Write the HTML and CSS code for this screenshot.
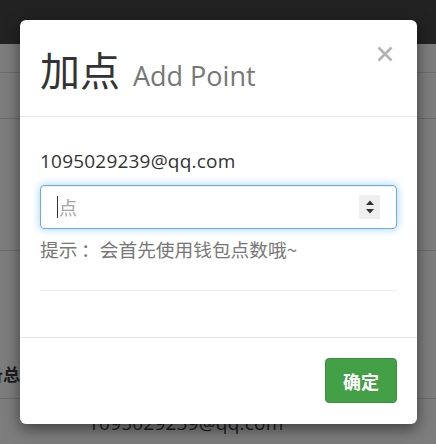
FILE: index.html
```html
<!DOCTYPE html>
<html lang="zh-CN">
<head>
<meta charset="utf-8">
<title>加点</title>
<link rel="stylesheet" href="styles.css">
</head>
<body>
<div class="page">
  <div class="navbar"></div>
  <div class="row r1"></div>
  <div class="row r2"></div>
  <div class="row r3"></div>
  <div class="row r4"><span class="cut"><span>设备总</span></span></div>
  <div class="row r5"><span class="bg-email">1095029239@qq.com</span></div>
</div>

<div class="modal">
  <div class="modal-header">
    <h4 class="modal-title"><span class="zh">加点</span><small>Add Point</small></h4>
    <button class="close" type="button" aria-label="Close">
      <svg width="16" height="16" viewBox="0 0 16 16"><path d="M1.5 1.5 L14.5 14.5 M14.5 1.5 L1.5 14.5" stroke="#b3b3b3" stroke-width="2.6" fill="none"/></svg>
    </button>
  </div>
  <div class="modal-body">
    <p class="email">1095029239@qq.com</p>
    <div class="field">
      <span class="caret"></span>
      <input class="num" type="text" placeholder="点">
      <span class="spin">
        <svg width="10" height="16" viewBox="0 0 10 16"><path d="M1 6 L5 1.5 L9 6 Z M1 10 L5 14.5 L9 10 Z" fill="#333"/></svg>
      </span>
    </div>
    <p class="hint">提示&#8201;：会首先使用钱包点数哦~</p>
    <hr class="sep">
  </div>
  <div class="modal-footer">
    <button class="btn-ok" type="button">确定</button>
  </div>
</div>
</body>
</html>
```

FILE: styles.css
```css
* { box-sizing: border-box; }
html, body { margin: 0; padding: 0; }
body {
  width: 436px;
  height: 444px;
  overflow: hidden;
  background: #7d7d7d;
  font-family: "Open Sans", "Noto Sans CJK SC", sans-serif;
  color: #333;
  position: relative;
}
.page { display: flex; flex-direction: column; }
.navbar { height: 44px; background: #222; }
.row { border-bottom: 1px solid #6c6c6c; display: flex; align-items: center; }
.r1 { height: 29px; }
.r2 { height: 46px; }
.r3 { height: 132px; }
.r4 { height: 148px; align-items: flex-end; padding-bottom: 12px; }
.r5 { height: 60px; align-items: flex-start; padding-left: 88px; padding-top: 12px; }
.cut {
  width: 20px; overflow: hidden; display: flex; justify-content: flex-end;
  font-family: "Noto Sans CJK SC", sans-serif; font-weight: 700; font-size: 17px; color: #1c1c1c;
  white-space: nowrap; line-height: 24px;
}
.bg-email { font-size: 19px; letter-spacing: 0.2px; color: #1e1e1e; line-height: 24px; }

.modal {
  position: absolute;
  left: 20px; top: 20px;
  width: 397px;
  height: 404px;
  background: #fff;
  border-radius: 6px;
  box-shadow: 0 5px 15px rgba(0,0,0,.5);
  display: flex; flex-direction: column;
}
.modal-header {
  position: relative;
  height: 97px;
  padding: 20px 20px 0;
  border-bottom: 1px solid #e5e5e5;
}
.modal-title {
  margin: 0;
  font-weight: 400;
  height: 59px;
  display: flex;
  align-items: baseline;
  color: #333;
}
.modal-title .zh {
  font-family: "Noto Sans CJK SC", sans-serif;
  font-size: 40px;
  line-height: 59px;
}
.modal-title small {
  font-family: "Open Sans", sans-serif;
  font-size: 27px;
  line-height: 59px;
  color: #777;
  margin-left: 13px;
}
.close {
  position: absolute;
  right: 24px; top: 26px;
  border: 0; background: none; padding: 0;
  width: 16px; height: 16px;
  display: flex;
}
.modal-body {
  padding: 32px 20px 46px;
}
.email { margin: 0; font-size: 19px; letter-spacing: 0.2px; line-height: 24px; color: #333; }
.field {
  margin-top: 12px;
  height: 44px;
  border: 1px solid #66afe9;
  border-radius: 4px;
  box-shadow: inset 0 1px 1px rgba(0,0,0,.075), 0 0 8px rgba(102,175,233,.6);
  display: flex; align-items: center;
  padding-left: 16px;
  padding-right: 16px;
}
.caret { width: 1px; height: 22px; background: #333; }
.num {
  flex: 1; min-width: 0;
  border: 0; outline: 0; padding: 0 0 0 1px;
  font-family: "Noto Sans CJK SC", sans-serif;
  font-size: 18px;
  color: #333;
  background: transparent;
}
.num::placeholder { color: #a5a5a5; }
.spin {
  width: 21px; height: 24px; background: #efefef;
  display: flex; align-items: center; justify-content: center;
}
.hint {
  margin: 7px 0 0;
  font-size: 18.7px; line-height: 26px;
  color: #777;
  font-family: "Noto Sans CJK SC", sans-serif;
}
.sep { margin: 28px 0 0; border: 0; border-top: 1px solid #eee; height: 0; }
.modal-footer {
  border-top: 1px solid #e5e5e5;
  padding: 20px 20px 20px;
  display: flex; justify-content: flex-end;
}
.btn-ok {
  width: 72px; height: 45px;
  background: #43a047;
  border: 1px solid #3b9140;
  border-radius: 4px;
  color: #fff;
  font-family: "Noto Sans CJK SC", sans-serif;
  font-weight: 700;
  font-size: 18px;
  padding: 0;
}
```
